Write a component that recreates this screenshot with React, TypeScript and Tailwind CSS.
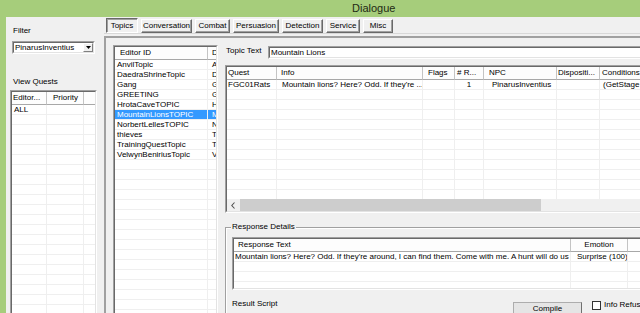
import React from 'react';

type Col = { label: string; w: string; hp: string; cp: string };

const Sunken = ({ className = '', inner = '', children }: { className?: string; inner?: string; children?: React.ReactNode }) => (
    <div className={`border border-t-[#a0a0a0] border-l-[#a0a0a0] border-r-white border-b-white ${className}`}>
        <div className={`h-full border border-t-[#696969] border-l-[#696969] border-r-[#e3e3e3] border-b-[#e3e3e3] bg-white overflow-hidden ${inner}`}>
            {children}
        </div>
    </div>
);

const ListView = ({ cols, rows, empty, sel = -1, frame, footer }: {
    cols: Col[];
    rows: string[][];
    empty: number;
    sel?: number;
    frame: string;
    footer?: React.ReactNode;
}) => {
    const all: (string[] | null)[] = [...rows, ...Array(empty).fill(null)];
    return (
        <Sunken className={frame} inner="flex flex-col">
            <div className="flex h-[13px] shrink-0">
                {cols.map((c, i) => (
                    <div
                        key={i}
                        className={`${c.w} ${c.hp} shrink-0 h-full overflow-hidden whitespace-nowrap bg-[#fdfdfd] border-r border-b border-r-[#c4c4c4] border-b-[#a8a8a8] leading-[12px]`}
                    >
                        {c.label}
                    </div>
                ))}
            </div>
            <div className="flex-1 min-h-0 overflow-hidden">
                {all.map((r, ri) => (
                    <div key={ri} className="flex h-[10px]">
                        {cols.map((c, ci) => (
                            <div
                                key={ci}
                                className={`${c.w} ${c.cp} shrink-0 h-full overflow-hidden whitespace-nowrap border-r border-b border-[#efefef] leading-[9px] ${ri === sel ? 'bg-[#3399ff] text-white' : ''}`}
                            >
                                {r ? r[ci] : ''}
                            </div>
                        ))}
                    </div>
                ))}
            </div>
            {footer}
        </Sunken>
    );
};

const TABS = [
    { t: 'Topics', w: 'w-[32px]' },
    { t: 'Conversation', w: 'w-[51px]' },
    { t: 'Combat', w: 'w-[35px]' },
    { t: 'Persuasion', w: 'w-[46px]' },
    { t: 'Detection', w: 'w-[41px]' },
    { t: 'Service', w: 'w-[34px]' },
    { t: 'Misc', w: 'w-[30px]' },
];

const TOPICS = [
    ['AnvilTopic', 'Anvil'],
    ['DaedraShrineTopic', 'Daedra'],
    ['Gang', 'Gang'],
    ['GREETING', 'Greeting'],
    ['HrotaCaveTOPIC', 'Hrota'],
    ['MountainLionsTOPIC', 'Mountain'],
    ['NorbertLellesTOPIC', 'Norbert'],
    ['thieves', 'Thieves'],
    ['TrainingQuestTopic', 'Training'],
    ['VelwynBeniriusTopic', 'Velwyn'],
];

const QUEST_COLS: Col[] = [
    { label: 'Editor...', w: 'w-[35px]', hp: 'pl-[1px]', cp: 'pl-[2px]' },
    { label: 'Priority', w: 'w-[37px]', hp: 'pl-[6px]', cp: 'pl-[2px]' },
    { label: '', w: 'w-[20px]', hp: '', cp: '' },
];

const TOPIC_COLS: Col[] = [
    { label: 'Editor ID', w: 'w-[93px]', hp: 'pl-[5px]', cp: 'pl-[2px]' },
    { label: 'Description', w: 'w-[20px]', hp: 'pl-[4px]', cp: 'pl-[4px]' },
];

const INFO_COLS: Col[] = [
    { label: 'Quest', w: 'w-[50px]', hp: 'pl-[1px]', cp: 'pl-[1px]' },
    { label: 'Info', w: 'w-[146px]', hp: 'pl-[4px]', cp: 'pl-[5px]' },
    { label: 'Flags', w: 'w-[32px]', hp: 'pl-[5px]', cp: 'pl-[5px]' },
    { label: '# R...', w: 'w-[29px]', hp: 'pl-[2px]', cp: 'text-center' },
    { label: 'NPC', w: 'w-[73px]', hp: 'pl-[5px]', cp: 'pl-[8px]' },
    { label: 'Dispositi...', w: 'w-[43px]', hp: 'pl-[1px]', cp: 'pl-[1px]' },
    { label: 'Conditions', w: 'w-[120px]', hp: 'pl-[2px]', cp: 'pl-[3px]' },
];

const RESPONSE_COLS: Col[] = [
    { label: 'Response Text', w: 'w-[337px]', hp: 'pl-[4px]', cp: 'pl-[1px]' },
    { label: 'Emotion', w: 'w-[57px]', hp: 'text-center', cp: 'pl-[6px]' },
    { label: '', w: 'w-[60px]', hp: '', cp: '' },
];

const LeftPanel = () => (
    <div className="w-[98px] shrink-0 flex flex-col">
        <div className="mt-[9px] ml-[7px] leading-[10px]">Filter</div>
        <Sunken className="mt-[5px] ml-[6px] w-[83px] h-[13px] shrink-0" inner="flex">
            <span className="flex-1 pl-[1px] leading-[9px]">PinarusInventius</span>
            <div className="w-[10px] h-full bg-[#f0f0f0] border border-t-white border-l-white border-r-[#808080] border-b-[#808080] flex items-center justify-center">
                <svg width="5" height="3" viewBox="0 0 5 3">
                    <path d="M0 0 H5 L2.5 3 Z" fill="#000" />
                </svg>
            </div>
        </Sunken>
        <div className="mt-[23px] ml-[7px] leading-[10px]">View Quests</div>
        <ListView
            frame="mt-[3px] ml-[4px] w-[87px] h-[240px] shrink-0"
            cols={QUEST_COLS}
            rows={[['ALL', '', '']]}
            empty={22}
        />
    </div>
);

const ScrollBar = () => (
    <div className="h-[12px] shrink-0 flex bg-[#f0f0f0]">
        <div className="w-[12px] h-full flex items-center justify-center">
            <svg width="4" height="7" viewBox="0 0 4 7">
                <path d="M3.5 0.5 L0.8 3.5 L3.5 6.5" stroke="#505050" strokeWidth="1.1" fill="none" />
            </svg>
        </div>
        <div className="ml-[1px] w-[301px] h-full bg-[#cdcdcd]" />
    </div>
);

const RightPanel = () => (
    <div className="flex-1 min-w-0 flex flex-col">
        {/* tab buttons */}
        <div className="h-[16px] shrink-0 flex items-end gap-[3px] pl-[2px]">
            {TABS.map((tab, i) => (
                <div
                    key={tab.t}
                    className={`${tab.w} shrink-0 flex items-center justify-center leading-[10px] border ${
                        i === 0
                            ? 'h-[15px] border-t-[#696969] border-l-[#696969] border-r-white border-b-white shadow-[inset_1px_1px_0_#a0a0a0]'
                            : 'h-[14px] border-t-white border-l-white border-r-[#696969] border-b-[#696969] shadow-[inset_-1px_-1px_0_#a0a0a0]'
                    }`}
                >
                    {tab.t}
                </div>
            ))}
        </div>
        <div className="h-[3px] shrink-0 border-t border-[#d8d8d8]" />

        {/* tab page */}
        <div className="flex-1 min-h-0 flex border-t-2 border-l-2 border-[#a0a0a0]">
            <ListView
                frame="ml-[7px] mt-[7px] w-[105px] h-[300px] shrink-0"
                cols={TOPIC_COLS}
                rows={TOPICS}
                empty={16}
                sel={5}
            />

            <div className="ml-[6px] flex-1 min-w-0 flex flex-col">
                <div className="mt-[8px] h-[13px] shrink-0 flex">
                    <div className="w-[44px] shrink-0 pl-[2px] leading-[9px]">Topic Text</div>
                    <Sunken className="w-[400px] h-full shrink-0">
                        <div className="pl-[1px] leading-[9px]">Mountain Lions</div>
                    </Sunken>
                </div>

                <ListView
                    frame="mt-[6px] ml-[1px] w-[500px] h-[148px] shrink-0"
                    cols={INFO_COLS}
                    rows={[['FGC01Rats', "Mountain lions? Here? Odd. If they're ...", '', '1', 'PinarusInventius', '', '(GetStage']]}
                    empty={13}
                    footer={<ScrollBar />}
                />

                {/* Response Details group */}
                <div className="relative mt-[14px] ml-[1px] w-[460px] h-[100px] shrink-0 border-t border-l border-[#a0a0a0] shadow-[inset_1px_1px_0_#fff]">
                    <span className="absolute left-[5px] -top-[6px] px-[1px] bg-[#f0f0f0] leading-[10px]">Response Details</span>
                    <ListView
                        frame="mt-[9px] ml-[6px] w-[450px] h-[53px]"
                        cols={RESPONSE_COLS}
                        rows={[[
                            "Mountain lions? Here? Odd. If they're around, I can find them. Come with me. A hunt will do us g...",
                            'Surprise (100)',
                            '',
                        ]]}
                        empty={3}
                    />
                    <div className="mt-[9px] ml-[6px] flex h-[14px]">
                        <div className="w-[281px] shrink-0 leading-[10px]">Result Script</div>
                        <div className="mt-[3px] w-[69px] h-[16px] shrink-0 bg-[#e5e5e5] border border-[#adadad] border-r-[#707070] flex justify-center leading-[12px]">
                            Compile
                        </div>
                        <div className="ml-[10px] mt-[2px] w-[9px] h-[9px] shrink-0 bg-white border border-[#333]" />
                        <div className="ml-[3px] leading-[12px] whitespace-nowrap">Info Refusal</div>
                    </div>
                </div>
            </div>
        </div>
    </div>
);

export default function App() {
    return (
        <div className="w-[640px] h-[313px] overflow-hidden bg-[#a6cd7b] flex flex-col font-['Liberation_Sans',Arial,sans-serif] text-[8px] text-black">
            <div className="h-[17px] shrink-0 pl-[352px] pt-[1px] text-[11px] leading-[14px] text-[#1f2a14]">Dialogue</div>
            <div className="flex-1 min-h-0 flex pl-[6px]">
                <div className="flex-1 min-w-0 flex bg-[#f0f0f0]">
                    <LeftPanel />
                    <RightPanel />
                </div>
            </div>
        </div>
    );
}
